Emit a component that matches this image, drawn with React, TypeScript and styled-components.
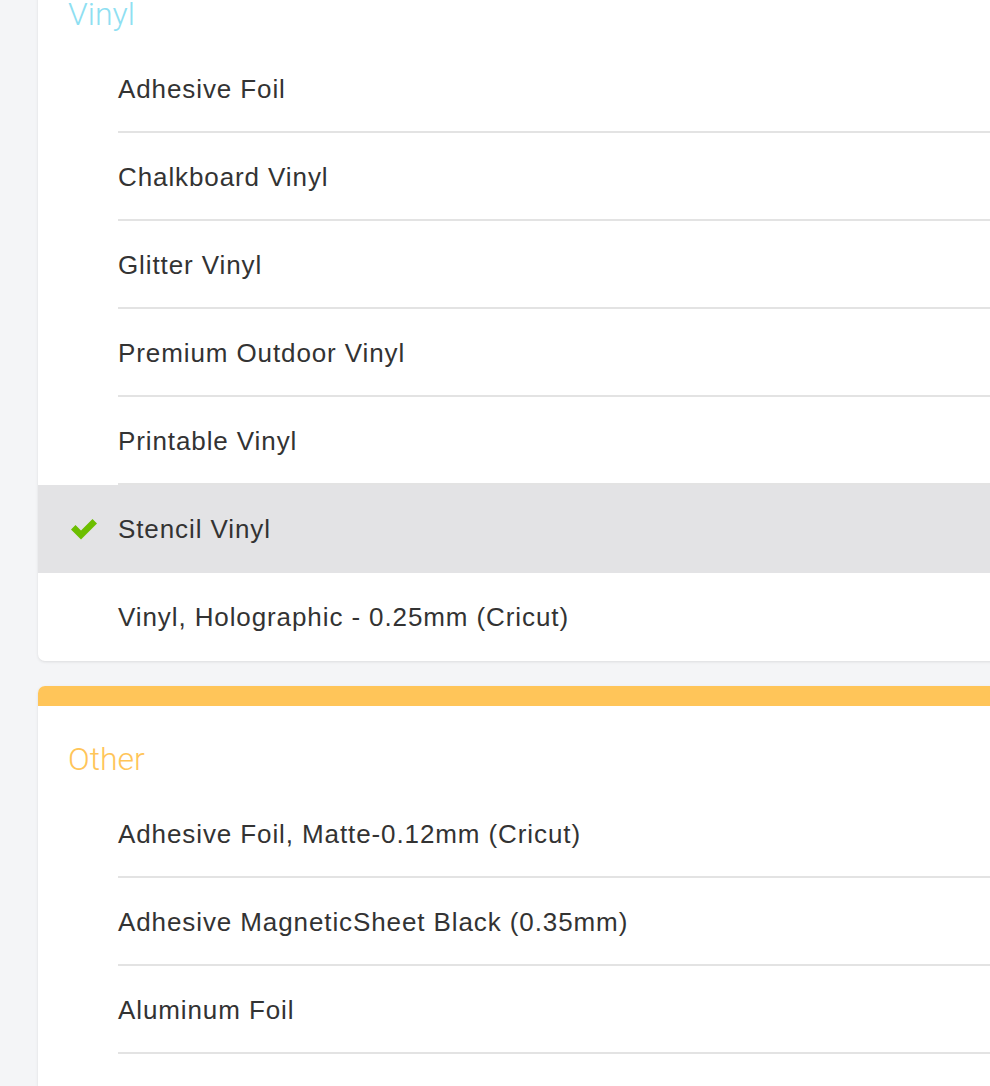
import styled, { createGlobalStyle } from "styled-components"

const GlobalStyle = createGlobalStyle`
    html, body {
        margin: 0;
        padding: 0;
        background: #f4f5f7;
        font-family: "Liberation Sans", Arial, sans-serif;
        color: #333333;
        overflow: hidden;
    }
`

type Section = {
    title: string
    color: string
    items: string[]
    selected?: string
}

const sections: Section[] = [
    {
        title: "Vinyl",
        color: "#8fdff2",
        items: [
            "Adhesive Foil",
            "Chalkboard Vinyl",
            "Glitter Vinyl",
            "Premium Outdoor Vinyl",
            "Printable Vinyl",
            "Stencil Vinyl",
            "Vinyl, Holographic - 0.25mm (Cricut)",
        ],
        selected: "Stencil Vinyl",
    },
    {
        title: "Other",
        color: "#ffc559",
        items: [
            "Adhesive Foil, Matte-0.12mm (Cricut)",
            "Adhesive MagneticSheet Black (0.35mm)",
            "Aluminum Foil",
            "Aluminum Metal - 0.14mm",
        ],
    },
]

const Check = () => (
    <svg width="28" height="24" viewBox="0 0 28 24">
        <path d="M1 12.5 L5.5 8 L11 13.5 L22.5 2 L27 6.5 L11 22.5 Z" fill="#6cbe00" />
    </svg>
)

export default () => {
    return (
        <>
            <GlobalStyle />
            <Page>
                {sections.map((s) => (
                    <Card key={s.title}>
                        <Bar color={s.color} />
                        <Heading color={s.color}>{s.title}</Heading>
                        <List>
                            {s.items.map((item) => {
                                const active = item === s.selected
                                return (
                                    <Row key={item} $active={active}>
                                        <Mark>{active && <Check />}</Mark>
                                        <Label $active={active}>{item}</Label>
                                    </Row>
                                )
                            })}
                        </List>
                    </Card>
                ))}
            </Page>
        </>
    )
}

const Page = styled.div`
    display: flex;
    flex-direction: column;
    gap: 25px;
    margin-top: -59px;
    padding-left: 38px;
    width: 1000px;
`

const Card = styled.div`
    background: #ffffff;
    border-radius: 7px;
    box-shadow: 0 1px 3px rgba(0, 0, 0, 0.1);
    overflow: hidden;
`

const Bar = styled.div<{ color: string }>`
    height: 20px;
    background: ${(p) => p.color};
`

const Heading = styled.div<{ color: string }>`
    color: ${(p) => p.color};
    font-family: Roboto, "Liberation Sans", sans-serif;
    font-weight: 300;
    font-size: 32px;
    line-height: 36px;
    padding: 35px 0 0 30px;
`

const List = styled.div`
    display: flex;
    flex-direction: column;
    padding-top: 13px;
`

const Row = styled.div<{ $active: boolean }>`
    display: flex;
    align-items: center;
    height: 88px;
    background: ${(p) => (p.$active ? "#e3e3e5" : "transparent")};
    &:last-child > div:last-child {
        border-bottom-color: transparent;
    }
`

const Mark = styled.div`
    width: 80px;
    height: 100%;
    display: flex;
    align-items: center;
    justify-content: flex-end;
    padding-right: 20px;
    box-sizing: border-box;
`

const Label = styled.div<{ $active: boolean }>`
    flex: 1;
    height: 100%;
    display: flex;
    align-items: center;
    font-size: 26px;
    letter-spacing: 0.9px;
    box-sizing: border-box;
    border-bottom: 2px solid ${(p) => (p.$active ? "transparent" : "#e3e3e3")};
    padding-top: 2px;
`
